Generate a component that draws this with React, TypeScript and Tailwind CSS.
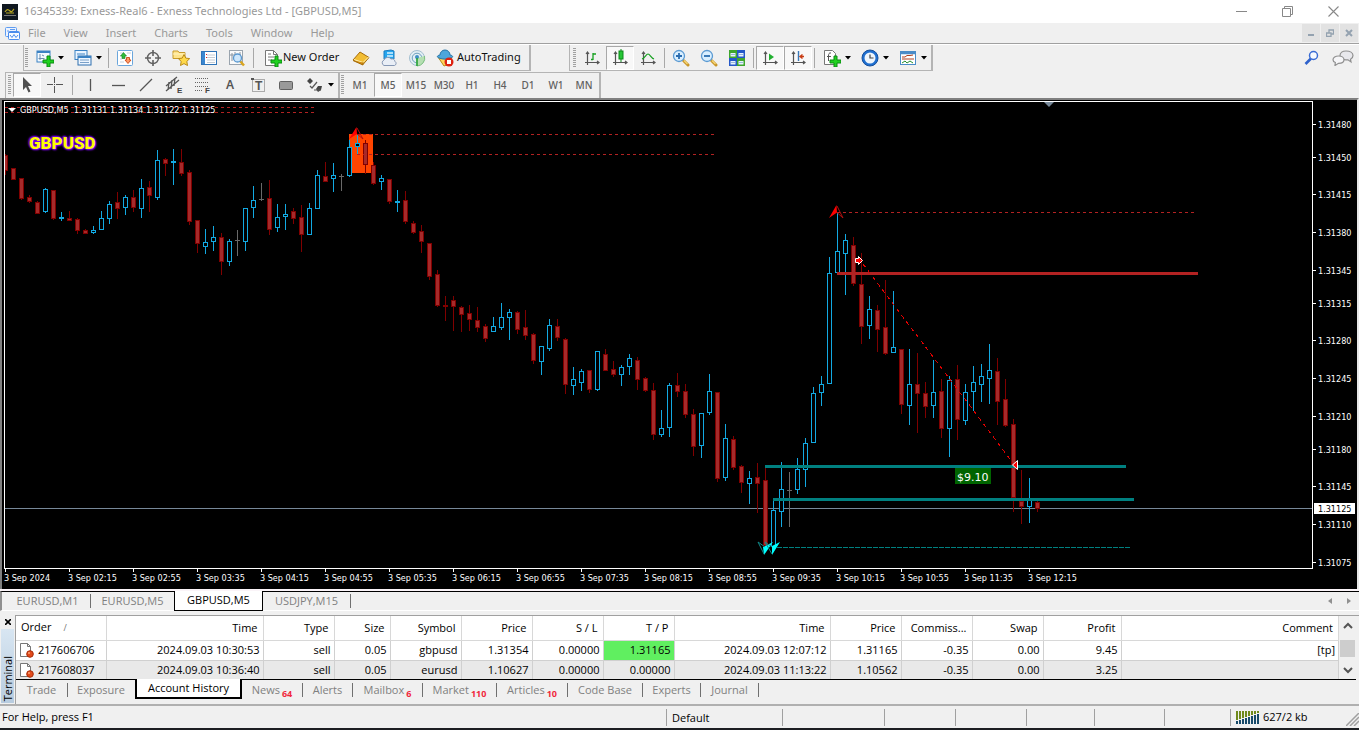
import { ReactNode } from "react";

type Candle = ["u" | "d" | "n", number, number, number, number];

// direction, high, body top, body bottom, low
const CANDLES: Candle[] = [
  ["d", 154, 155, 171, 175], ["d", 168, 168, 180, 180], ["d", 178, 178, 199, 200], ["d", 195, 197, 202, 203],
  ["d", 201, 202, 214, 214], ["u", 188, 189, 212, 213], ["d", 190, 190, 219, 220], ["u", 212, 217, 219, 221],
  ["d", 211, 218, 221, 221], ["d", 218, 219, 231, 234], ["d", 229, 230, 234, 234], ["u", 226, 230, 233, 234],
  ["u", 211, 218, 230, 230], ["u", 201, 204, 219, 224], ["d", 192, 202, 209, 219], ["u", 195, 197, 208, 215],
  ["d", 190, 197, 208, 212], ["u", 179, 188, 209, 218], ["d", 181, 187, 196, 212], ["u", 150, 160, 198, 200],
  ["d", 158, 159, 164, 176], ["u", 149, 161, 163, 185], ["d", 149, 162, 174, 176], ["d", 170, 172, 222, 225],
  ["d", 220, 220, 244, 253], ["u", 229, 242, 247, 254], ["u", 226, 237, 242, 251], ["d", 233, 237, 262, 275],
  ["u", 239, 241, 262, 266], ["n", 230, 240, 241, 256], ["u", 208, 208, 242, 251], ["u", 186, 200, 208, 218],
  ["n", 183, 199, 200, 201], ["d", 180, 198, 230, 235], ["u", 204, 217, 228, 232], ["u", 204, 214, 217, 230],
  ["d", 208, 211, 219, 224], ["d", 205, 217, 235, 252], ["u", 203, 208, 235, 235], ["u", 170, 175, 209, 209],
  ["d", 162, 176, 182, 182], ["u", 163, 175, 179, 192], ["n", 174, 176, 177, 191], ["u", 140, 147, 176, 177],
  ["u", 135, 143, 147, 154], ["d", 140, 143, 165, 174], ["d", 162, 165, 184, 185], ["u", 175, 178, 182, 190],
  ["d", 179, 179, 202, 204], ["u", 190, 201, 203, 212], ["d", 191, 200, 222, 224], ["d", 221, 223, 233, 234],
  ["d", 225, 231, 242, 253], ["d", 243, 243, 277, 280], ["d", 270, 274, 306, 307], ["d", 296, 305, 307, 321],
  ["d", 296, 300, 307, 331], ["d", 306, 307, 315, 332], ["d", 305, 313, 320, 331], ["d", 307, 320, 328, 332],
  ["d", 324, 326, 339, 342], ["u", 317, 326, 332, 332], ["u", 303, 317, 328, 330], ["u", 309, 312, 318, 340],
  ["d", 311, 312, 330, 334], ["d", 310, 327, 336, 340], ["d", 333, 334, 361, 364], ["u", 346, 346, 362, 375],
  ["u", 319, 325, 349, 351], ["d", 319, 326, 338, 341], ["d", 338, 339, 385, 394], ["u", 367, 379, 386, 395],
  ["u", 369, 371, 383, 391], ["d", 370, 370, 390, 393], ["u", 351, 351, 390, 391], ["d", 349, 354, 371, 371],
  ["d", 361, 369, 375, 377], ["u", 365, 367, 375, 386], ["u", 354, 358, 367, 375], ["d", 357, 360, 380, 390],
  ["d", 377, 378, 391, 392], ["d", 383, 390, 435, 440], ["u", 410, 428, 435, 437], ["u", 383, 385, 428, 437],
  ["d", 373, 385, 392, 397], ["d", 384, 391, 415, 418], ["d", 409, 414, 447, 456], ["u", 413, 413, 446, 458],
  ["u", 374, 391, 413, 415], ["d", 392, 392, 479, 482], ["u", 424, 438, 478, 481], ["d", 436, 439, 468, 470],
  ["d", 465, 466, 483, 493], ["u", 471, 478, 484, 504], ["d", 463, 477, 484, 513], ["d", 467, 480, 546, 546],
  ["u", 499, 510, 547, 547], ["u", 462, 489, 512, 527], ["n", 472, 490, 491, 527], ["u", 458, 469, 490, 494],
  ["u", 438, 443, 470, 487], ["u", 387, 393, 443, 443], ["u", 376, 384, 393, 406], ["u", 257, 273, 384, 384],
  ["u", 212, 251, 273, 273], ["u", 234, 240, 254, 295], ["d", 237, 245, 284, 286], ["d", 253, 284, 327, 344],
  ["u", 296, 309, 326, 339], ["d", 305, 310, 330, 352], ["d", 280, 327, 354, 355], ["u", 291, 347, 353, 353],
  ["d", 349, 349, 405, 414], ["u", 349, 384, 406, 425], ["d", 353, 384, 394, 433], ["d", 382, 393, 407, 418],
  ["u", 360, 392, 406, 418], ["d", 379, 391, 429, 438], ["u", 376, 380, 429, 457], ["d", 365, 379, 420, 440],
  ["u", 384, 392, 421, 425], ["u", 366, 382, 392, 411], ["u", 364, 376, 385, 402], ["u", 344, 370, 379, 404],
  ["d", 358, 371, 402, 425], ["d", 379, 399, 426, 427], ["d", 419, 424, 498, 512], ["d", 470, 501, 507, 524],
  ["u", 478, 500, 507, 523], ["d", 501, 502, 509, 512],
];

const WICK = { u: "#12a9e2", d: "#800000", n: "#696969" };
const BODY = { u: "#000000", d: "#a52a2a", n: "#696969" };

const PRICES: [number, string][] = [
  [124, "1.31480"], [157, "1.31450"], [194, "1.31415"], [232, "1.31380"], [270, "1.31345"],
  [303, "1.31315"], [340, "1.31280"], [378, "1.31245"], [416, "1.31210"], [449, "1.31180"],
  [486, "1.31145"], [524, "1.31110"], [562, "1.31075"],
];

const TIMES = [
  "2024", "02:15", "02:55", "03:35", "04:15", "04:55", "05:35", "06:15", "06:55",
  "07:35", "08:15", "08:55", "09:35", "10:15", "10:55", "11:35", "12:15",
];

const COLUMNS: [string, string][] = [
  ["Order", "w-[90px]"], ["Time", "w-[157px]"], ["Type", "w-[71px]"], ["Size", "w-[56px]"],
  ["Symbol", "w-[71px]"], ["Price", "w-[71px]"], ["S / L", "w-[71px]"], ["T / P", "w-[71px]"],
  ["Time", "w-[156px]"], ["Price", "w-[71px]"], ["Commiss...", "w-[71px]"], ["Swap", "w-[71px]"],
  ["Profit", "w-[78px]"], ["Comment", "w-auto"],
];

const ORDERS = [
  ["217606706", "2024.09.03 10:30:53", "sell", "0.05", "gbpusd", "1.31354", "0.00000", "1.31165", "2024.09.03 12:07:12", "1.31165", "-0.35", "0.00", "9.45", "[tp]"],
  ["217608037", "2024.09.03 10:36:40", "sell", "0.05", "eurusd", "1.10627", "0.00000", "0.00000", "2024.09.03 11:13:22", "1.10562", "-0.35", "0.00", "3.25", ""],
];

const TERMINAL_TABS: [string, string, string][] = [
  ["Trade", "", "w-[52px]"], ["Exposure", "", "w-[67px]"], ["Account History", "", "w-[107px]"],
  ["News", "64", "w-[61px]"], ["Alerts", "", "w-[50px]"], ["Mailbox", "6", "w-[70px]"],
  ["Market", "110", "w-[74px]"], ["Articles", "10", "w-[71px]"], ["Code Base", "", "w-[75px]"],
  ["Experts", "", "w-[58px]"], ["Journal", "", "w-[58px]"],
];

const STATUS_CELLS = ["w-[102px]", "w-[71px]", "w-[71px]", "w-[68px]", "w-[70px]", "w-[66px]"];

const Icon = ({ children }: { children: ReactNode }) => (
  <svg width="18" height="18" viewBox="0 0 18 18" fill="none" className="shrink-0">
    {children}
  </svg>
);

const Plus = () => (
  <path d="M11 7h3v4h4v3h-4v4h-3v-4H7v-3h4z" fill="#1fd11f" stroke="#0a8a12" strokeWidth="1" />
);

const ToolButton = ({
  label,
  pressed,
  menu,
  children,
}: {
  label: string;
  pressed?: boolean;
  menu?: boolean;
  children: ReactNode;
}) => (
  <button
    aria-label={label}
    className={`flex h-6 shrink-0 items-center ${
      menu ? "w-[38px] gap-1 pl-[6px]" : "w-7 justify-center"
    } ${pressed ? "border border-[#a8a8a8] border-r-white border-b-white bg-[#f8f8f8]" : ""}`}
  >
    {children}
    {menu && (
      <svg width="6" height="4" viewBox="0 0 6 4" className="shrink-0">
        <path d="M0 0h6L3 3.500z" fill="#000" />
      </svg>
    )}
  </button>
);

const Separator = () => <span className="mx-[2px] h-5 w-px shrink-0 bg-[#a8a8a8]" />;

const Grip = () => (
  <svg width="4" height="20" className="mx-px shrink-0" shapeRendering="crispEdges">
    {[0, 2, 4, 6, 8, 10, 12, 14, 16, 18].map((y) => (
      <rect key={y} x="0" y={y} width="3" height="1" fill="#a0a0a0" />
    ))}
  </svg>
);

const Axes = () => (
  <path d="M4.500 3v13M2 13.500h14M3 5l1.500-2L6 5M14 12l2 1.500-2 1.500" stroke="#555" strokeWidth="1.200" />
);

const Lens = ({ plus }: { plus?: boolean }) => (
  <Icon>
    <path d="M11.500 11.500l4.500 4.500" stroke="#c8962a" strokeWidth="3" strokeLinecap="round" />
    <path d="M12 11.500l3.500 3.500" stroke="#f7d978" strokeWidth="1.200" />
    <circle cx="7" cy="7" r="5.500" fill="#d9efff" stroke="#5b9ad2" strokeWidth="1.300" />
    <path d={plus ? "M4 7h6M7 4v6" : "M4 7h6"} stroke="#2a6cb0" strokeWidth="1.800" />
  </Icon>
);

const MainToolbar = () => (
  <div className="flex h-[27px] items-center border-t border-white">
    <div className="ml-[23px] flex h-[26px] items-center border-r-2 border-b border-l border-[#b4b4b4] pr-px">
      <Grip />
      <ToolButton label="New chart" menu>
        <Icon>
          <rect x="1" y="2" width="13" height="11" fill="#f4faff" stroke="#3b82c4" />
          <path d="M1 3h13" stroke="#3b82c4" strokeWidth="2" />
          <path d="M4 5v6M2.500 9.500h6M6 6l2 1" stroke="#6c8fb0" />
          <Plus />
        </Icon>
      </ToolButton>
      <ToolButton label="Profiles" menu>
        <Icon>
          <rect x="1" y="1.500" width="12" height="9" fill="#eaf4ff" stroke="#3b82c4" />
          <path d="M3 5h8" stroke="#3b82c4" />
          <rect x="4" y="7" width="13" height="9" fill="#eef6ff" stroke="#2f6fae" />
          <path d="M4 8h13" stroke="#3b82c4" strokeWidth="2" />
          <path d="M6 11h9M6 13.500h9" stroke="#7aa0c8" />
        </Icon>
      </ToolButton>
      <Separator />
      <ToolButton label="Market Watch">
        <Icon>
          <rect x="1.500" y="1.500" width="15" height="15" rx="1" fill="#fff" stroke="#6aa6dc" />
          <path d="M4 4h3M4 7h1M4 10h2M4 13h4M11 4h4" stroke="#c4d0dc" />
          <path d="M7.500 3.500L10.500 7H9v2.500H6V7H4.500z" fill="#2dbb3a" stroke="#168020" strokeWidth=".6" />
          <path d="M12 14.500L9 11h1.500V8.500h3V11H15z" fill="#ff9a66" stroke="#c94716" strokeWidth=".9" />
        </Icon>
      </ToolButton>
      <ToolButton label="Data Window">
        <Icon>
          <circle cx="9" cy="9" r="5.500" stroke="#606060" strokeWidth="1.400" />
          <path d="M9 1v6M9 11v6M1 9h6M11 9h6" stroke="#606060" strokeWidth="1.600" />
        </Icon>
      </ToolButton>
      <ToolButton label="Navigator">
        <Icon>
          <path d="M1 2h5l1 1.500h6v6H1z" fill="#ffe48a" stroke="#c79a2a" />
          <path d="M1 5h12" stroke="#fff3c0" />
          <path d="M12 5.500l1.800 3.600 3.900.5-2.900 2.800.7 4.100-3.500-1.900-3.500 1.900.7-4.100-2.900-2.800 3.900-.5z" fill="#ffd94a" stroke="#b98a18" />
        </Icon>
      </ToolButton>
      <ToolButton label="Terminal">
        <Icon>
          <rect x="1.500" y="2.500" width="15" height="13" fill="#fff" stroke="#2f74b8" />
          <path d="M3.500 3v12" stroke="#3a86d0" strokeWidth="3" />
          <path d="M7 6h8M7 8.500h8M7 11h8M7 13.500h8" stroke="#c4ccd4" />
          <path d="M6 5h1v1H6zM6 8h1v1H6z" fill="#e02020" />
        </Icon>
      </ToolButton>
      <ToolButton label="Strategy Tester">
        <Icon>
          <rect x="1.500" y="1.500" width="13" height="14" fill="#fafafa" stroke="#9aa4ae" />
          <path d="M4 4v8M7 3v4M12 3v6M2 6h11" stroke="#8a94a0" />
          <path d="M12 12l4 4.500" stroke="#d9a520" strokeWidth="2.500" />
          <circle cx="9.500" cy="9" r="4" fill="#cde6fb" stroke="#5a98d0" strokeWidth="1.300" />
        </Icon>
      </ToolButton>
      <Separator />
      <button className="flex h-6 w-[91px] shrink-0 items-center gap-px pl-2 font-['Noto_Sans'] text-[11px] text-[#111]">
        <Icon>
          <path d="M1.500 1.500h8l4 4v11h-12z" fill="#fff" stroke="#777" />
          <path d="M9.500 1.500v4h4M4 5h3M4 8h6M4 11h4" stroke="#777" />
          <Plus />
        </Icon>
        <span className="whitespace-nowrap">New Order</span>
      </button>
      <ToolButton label="MetaEditor">
        <Icon>
          <path d="M1 11l7-8 9 5.500-6 7z" fill="#f2bd33" stroke="#a66c0a" />
          <path d="M2 10.500l9 3 5.500-5.500" stroke="#fff0b0" />
          <path d="M1 11.500l10 4.500v-2.500" fill="#d38d14" stroke="#a66c0a" />
        </Icon>
      </ToolButton>
      <ToolButton label="VPS">
        <Icon>
          <path d="M4 2l7-1 3 1v8l-7 1-3-1z" fill="#25a5ee" stroke="#1a7cc0" />
          <path d="M7 4h6M7 7h6" stroke="#d8f2ff" strokeWidth="1.300" />
          <path d="M4 16.500a3 3 0 010-5.500 4 4 0 017-1 3 3 0 014 2.500 2.200 2.200 0 01-.5 4z" fill="#e9eef6" stroke="#8597b4" />
        </Icon>
      </ToolButton>
      <ToolButton label="Signals">
        <Icon>
          <circle cx="9" cy="9" r="7.500" fill="#e2eff4" stroke="#a4bfd0" />
          <circle cx="9" cy="9" r="4.800" stroke="#6e9fbe" />
          <path d="M9 9v8a8 8 0 007.500-10" fill="#b5dfb2" stroke="#7cc080" />
          <circle cx="9" cy="8" r="2" fill="#3f8fc4" />
          <path d="M9 9v8" stroke="#2ea43a" strokeWidth="1.600" />
        </Icon>
      </ToolButton>
      <button className="flex h-6 w-[97px] shrink-0 items-center gap-[3px] pl-[5px] font-['Noto_Sans'] text-[11px] text-[#111]">
        <Icon>
          <path d="M2 8h14l-3 7-5 2z" fill="#ffd65c" stroke="#b98a18" />
          <path d="M4 6a5 5 0 0110 0c3 .5 3.500 2 1 3-4 1.500-8 1.500-12 0-2.500-1-2-2.500 1-3z" fill="#4da6dc" stroke="#2574a8" />
          <circle cx="13" cy="13" r="4.500" fill="#dd2211" />
          <rect x="11" y="11" width="4" height="4" fill="#fff" />
        </Icon>
        <span className="whitespace-nowrap">AutoTrading</span>
      </button>
    </div>
    <div className="ml-[38px] flex h-[26px] items-center border-r-2 border-b border-l border-[#b4b4b4] pl-[2px]">
      <Grip />
      <ToolButton label="Bar chart">
        <Icon>
          <Axes />
          <path d="M10 4v7M10 5h3M8 10.500h2" stroke="#16a020" strokeWidth="1.300" />
        </Icon>
      </ToolButton>
      <ToolButton label="Candlesticks" pressed>
        <Icon>
          <Axes />
          <path d="M10 0v13" stroke="#0b8a18" />
          <rect x="8" y="2" width="4" height="8" fill="#25c535" stroke="#0b8a18" />
        </Icon>
      </ToolButton>
      <ToolButton label="Line chart">
        <Icon>
          <Axes />
          <path d="M3 10c3-1 4-5 6-5s3 4 6 5" stroke="#16a020" strokeWidth="1.200" />
        </Icon>
      </ToolButton>
      <Separator />
      <ToolButton label="Zoom in"><Lens plus /></ToolButton>
      <ToolButton label="Zoom out"><Lens /></ToolButton>
      <ToolButton label="Tile windows">
        <Icon>
          <path d="M1 1h8v8H1zM9 9h8v8H9z" fill="#3fa62d" />
          <path d="M9 1h8v8H9zM1 9h8v8H1z" fill="#2458c8" />
          <path d="M2.500 4h5v3.500h-5zM10.500 4h5v3.500h-5zM2.500 12h5v3.500h-5zM10.500 12h5v3.500h-5z" fill="#e8f2ff" />
          <path d="M3 5.500h4M11 5.500h4M3 13.500h4M11 13.500h4" stroke="#9ab8d8" />
        </Icon>
      </ToolButton>
      <Separator />
      <ToolButton label="Auto scroll" pressed>
        <Icon>
          <Axes />
          <path d="M8 4.500l5 3.500-5 3.500z" fill="#22b030" />
        </Icon>
      </ToolButton>
      <ToolButton label="Chart shift" pressed>
        <Icon>
          <Axes />
          <path d="M9.500 2v10" stroke="#3a78b8" strokeWidth="1.400" />
          <path d="M15 7.500h-4M13.500 5.500l-2.500 2 2.500 2" stroke="#c83c14" strokeWidth="1.400" />
        </Icon>
      </ToolButton>
      <Separator />
      <ToolButton label="Indicators" menu>
        <Icon>
          <path d="M1.500 1.500h8l3 3v11h-11z" fill="#fff" stroke="#777" />
          <path d="M8 4c-2-.5-2.500 1-2.500 3v5M4 7.500h4" stroke="#555" />
          <Plus />
        </Icon>
      </ToolButton>
      <ToolButton label="Periods" menu>
        <Icon>
          <circle cx="9" cy="9" r="8" fill="#1f6fd0" stroke="#164f9c" />
          <circle cx="9" cy="9" r="5.500" fill="#eef5fc" />
          <path d="M9 5.500V9h3.500" stroke="#444" strokeWidth="1.200" />
        </Icon>
      </ToolButton>
      <ToolButton label="Templates" menu>
        <Icon>
          <rect x="1.500" y="2.500" width="15" height="13" fill="#fff" stroke="#4a8cc8" />
          <path d="M1 4h16" stroke="#4a8cc8" strokeWidth="2.500" />
          <path d="M3 8h3l2-1.500h3l3-.5M3 10h12" stroke="#b04020" />
          <path d="M3 14l3-2 2 2 3-2 3 2" stroke="#259030" />
        </Icon>
      </ToolButton>
    </div>
    <div className="ml-auto flex items-center gap-3 pr-[5px]">
      <button aria-label="Search">
        <svg width="16" height="16" viewBox="0 0 16 16" fill="none">
          <path d="M1.500 14L7 8.500" stroke="#2f62cc" strokeWidth="2.600" />
          <circle cx="9.500" cy="5.500" r="4" fill="#f6faff" stroke="#3a6cd4" strokeWidth="1.500" />
        </svg>
      </button>
      <button aria-label="Chat">
        <svg width="22" height="16" viewBox="0 0 22 16" fill="none" stroke="#909090" strokeWidth="1.200">
          <path d="M14 1c4 0 7 1.800 7 4.500 0 2-1 3-2.500 3.700L19 12l-3-2.200C11 10.500 8 8.500 8 5.500S10.500 1 14 1z" fill="#e8e8ec" />
          <path d="M6.500 6c3 0 5.500 1.500 5.500 3.700s-2.500 3.600-5.500 3.600L3 15.500l.3-3C2 12 1 11 1 9.700 1 7.500 3.500 6 6.500 6z" fill="#f6f6f8" />
        </svg>
      </button>
    </div>
  </div>
);

const DrawToolbar = () => (
  <div className="flex h-[27px] items-center">
    <div className="ml-[5px] flex h-[26px] items-center border-t border-r-2 border-l border-[#b4b4b4] pl-px">
      <Grip />
      <ToolButton label="Cursor" pressed>
        <Icon><path d="M5 1v13l3-3 2.500 5.500 2-1L10 10h4z" fill="#505050" /></Icon>
      </ToolButton>
      <ToolButton label="Crosshair">
        <Icon><path d="M8.500 1v6M8.500 10v7M1 8.500h6M10 8.500h7M8 8.500h1" stroke="#555" /></Icon>
      </ToolButton>
      <span className="mx-[3px] h-5 w-px shrink-0 bg-[#a8a8a8]" />
      <ToolButton label="Vertical line">
        <Icon><path d="M9.500 3v12" stroke="#555" strokeWidth="1.300" /></Icon>
      </ToolButton>
      <ToolButton label="Horizontal line">
        <Icon><path d="M3 9.500h13" stroke="#555" strokeWidth="1.300" /></Icon>
      </ToolButton>
      <ToolButton label="Trendline">
        <Icon><path d="M3 15L15 3" stroke="#555" strokeWidth="1.200" /></Icon>
      </ToolButton>
      <ToolButton label="Equidistant channel">
        <Icon>
          <path d="M1 10L12 1M1 15L14 4M4 6l-1 8M7 4L6 13M10 2L9 10" stroke="#555" strokeWidth="1.300" />
          <text x="12" y="17" fontSize="8" fontWeight="700" fill="#444" className="font-['Liberation_Sans']">E</text>
        </Icon>
      </ToolButton>
      <ToolButton label="Fibonacci">
        <Icon>
          <path d="M2 2.500h14M2 6.500h14M2 10.500h14M2 14.500h8" stroke="#666" strokeDasharray="1 1" />
          <text x="12" y="17" fontSize="8" fontWeight="700" fill="#444" className="font-['Liberation_Sans']">F</text>
        </Icon>
      </ToolButton>
      <ToolButton label="Text">
        <span className="font-['Noto_Sans'] text-xs font-semibold text-[#555]">A</span>
      </ToolButton>
      <ToolButton label="Text label">
        <Icon>
          <rect x="3.500" y="3.500" width="12" height="12" stroke="#666" strokeDasharray="1 1" />
          <path d="M2 2h3v2H2z" fill="#555" />
          <text x="6" y="14" fontSize="12" fontWeight="700" fill="#555" className="font-['Liberation_Sans']">T</text>
        </Icon>
      </ToolButton>
      <ToolButton label="Rectangle">
        <Icon><rect x="2.500" y="5.500" width="13" height="8" rx="1" fill="#999" stroke="#606060" /></Icon>
      </ToolButton>
      <ToolButton label="Arrows" menu>
        <Icon>
          <path d="M4 2l3 3-3 3-3-3zM12 10h4l-1 4-3 2-2-3z" fill="#444" />
          <path d="M4 10l2 2 5-6M8 14h7" stroke="#555" strokeWidth="1.200" />
        </Icon>
      </ToolButton>
    </div>
    <div className="flex h-[26px] items-center border-t border-r-2 border-[#b4b4b4] pr-px text-[#606060]">
      <Grip />
      {["M1", "M5", "M15", "M30", "H1", "H4", "D1", "W1", "MN"].map((period) => (
        <ToolButton key={period} label={period} pressed={period === "M5"}>
          <span className="font-['Noto_Sans'] text-[10px] font-medium">{period}</span>
        </ToolButton>
      ))}
    </div>
  </div>
);

const DashedLine = ({ x1, x2, y, color = "#b22222", dash = "3 3" }: { x1: number; x2: number; y: number; color?: string; dash?: string }) => (
  <line x1={x1} x2={x2} y1={y + 0.5} y2={y + 0.5} stroke={color} strokeDasharray={dash} />
);

const Plot = () => (
  <svg className="block h-[466px] w-full" shapeRendering="crispEdges">
    <g transform="translate(-5 -102)">
      <rect x="349" y="134" width="24" height="39" fill="#ff4500" />
      <rect x="5" y="508" width="100%" height="1" fill="#778899" />
      {CANDLES.map(([dir, high, top, bottom, low], i) => {
        const x = 5 + i * 8;
        return (
          <g key={i}>
            <rect x={x} y={high} width="1" height={low - high} fill={WICK[dir]} />
            <rect x={x - 2} y={top} width="5" height={bottom - top} fill={WICK[dir]} />
            {bottom - top > 2 && (
              <rect x={x - 1} y={top + 1} width="3" height={bottom - top - 2} fill={BODY[dir]} />
            )}
          </g>
        );
      })}
      <DashedLine x1={5} x2={315} y={107} />
      <DashedLine x1={5} x2={315} y={112} />
      <DashedLine x1={357} x2={715} y={134} />
      <DashedLine x1={357} x2={715} y={154} />
      <DashedLine x1={837} x2={1195} y={212} />
      <DashedLine x1={777} x2={1130} y={547} color="#008080" dash="5 1" />
      <rect x="837" y="272" width="361" height="3" fill="#b22222" />
      <rect x="765" y="465" width="361" height="3" fill="#008080" />
      <rect x="773" y="498" width="361" height="3" fill="#008080" />
      <line x1="863" y1="264" x2="1013" y2="463" stroke="#e00000" strokeDasharray="4 4" />
      <g shapeRendering="auto">
        <path d="M356.500 127L349 139l8-5zM836.500 205L829 218l8-5.500z" fill="#ff0000" />
        <path d="M357 128l6 11-6-5M837 206l6 12-6-5.500" fill="none" stroke="#b01010" />
        <path d="M764 555l-1-8 10-5zM772 555l0-9 8-4z" fill="#00ffff" />
        <path d="M764 554l-6-12 7 5M772 554l-7-12 7 5" fill="none" stroke="#108888" />
        <path d="M855.500 258.500h3v-2l4 4-4 4v-2h-3z" fill="#ff0000" stroke="#fff" />
        <path d="M1017.500 460.500v9l-5-4.500z" fill="#ff0000" stroke="#fff" />
        <path d="M1044 102h10l-5 5z" fill="#778899" />
        <path d="M8 108h8l-4 4z" fill="#fff" />
      </g>
      <rect x="955" y="468" width="36" height="16" fill="#006400" />
      <text x="957" y="481" fontSize="11" fill="#fff" className="font-['DejaVu_Sans']">$9.10</text>
      <text x="20" y="113" fontSize="9" fill="#fff" className="font-['DejaVu_Sans_Condensed','Noto_Sans']" xmlSpace="preserve">GBPUSD,M5  1.31131 1.31134 1.31122 1.31125</text>
      <text x="29" y="149" fontSize="17" fontWeight="900" fill="#ffff00" className="font-['Roboto'] [text-shadow:0_0_2px_#8000ff,0_0_2px_#8000ff,1px_1px_2px_#8000ff,-1px_-1px_2px_#8000ff]">GBPUSD</text>
    </g>
  </svg>
);

const PriceAxis = () => (
  <svg className="block h-[468px] w-11 font-['DejaVu_Sans_Condensed','Noto_Sans'] text-[9px]">
    <g transform="translate(-1313 -101)" fill="#fff">
      {PRICES.map(([y, price]) => (
        <g key={price}>
          <rect x="1313" y={y} width="3" height="1" />
          <text x="1318" y={y + 4}>{price}</text>
        </g>
      ))}
      <rect x="1314" y="503" width="41" height="11" />
      <text x="1318" y="512" fill="#000">1.31125</text>
    </g>
  </svg>
);

const Chart = () => (
  <div className="border-t-2 border-r-2 border-l-2 border-[#808080] border-r-[#e8e8e8] bg-black pt-px pb-[2px] pl-[2px] text-white">
    <div className="flex">
      <div className="min-w-0 flex-1 border border-white">
        <Plot />
      </div>
      <PriceAxis />
    </div>
    <div className="flex h-[18px] overflow-hidden">
      {TIMES.map((time) => (
        <div key={time} className="w-16 shrink-0">
          <div className="ml-px h-[3px] w-px bg-white" />
          <div className="font-['DejaVu_Sans_Condensed','Noto_Sans'] text-[9px] leading-3 whitespace-nowrap">3 Sep {time}</div>
        </div>
      ))}
    </div>
  </div>
);

const ChartTabs = () => (
  <div className="flex h-[26px] flex-col border-t-2 border-[#faf4f8] text-[11px] text-[#808080]">
    <div className="flex h-5 items-center border-t border-b border-t-black border-b-white border-l-2 border-l-[#909090] pl-[3px]">
      <button className="h-[14px] w-[86px] border-r border-[#707070] leading-[14px]">EURUSD,M1</button>
      <button className="h-[14px] w-[83px] leading-[14px]">EURUSD,M5</button>
      <button className="-mt-px h-5 w-[89px] border-x border-b border-black bg-white leading-4 text-black">GBPUSD,M5</button>
      <button className="h-[14px] w-[88px] border-r border-[#707070] leading-[14px]">USDJPY,M15</button>
      <button aria-label="Scroll tabs left" className="mr-[15px] ml-auto">
        <svg width="4" height="6" viewBox="0 0 4 6"><path d="M4 0v6L0 3z" fill="#909090" /></svg>
      </button>
      <button aria-label="Scroll tabs right" className="mr-2">
        <svg width="4" height="6" viewBox="0 0 4 6"><path d="M0 0v6l4-3z" fill="#909090" /></svg>
      </button>
    </div>
  </div>
);

const OrderIcon = () => (
  <svg width="16" height="16" viewBox="0 0 16 16" fill="none" className="shrink-0">
    <path d="M1.500 1.500h7l3 3v10h-10z" fill="#fff" stroke="#777" />
    <path d="M8.500 1.500v3h3" stroke="#777" />
    <circle cx="11" cy="12" r="3.300" fill="#e24a1a" stroke="#a82c08" />
    <circle cx="10" cy="11" r="1" fill="#ffa070" />
  </svg>
);

const Terminal = () => (
  <div className="flex h-[89px]">
    <div className="flex w-[15px] shrink-0 flex-col items-center">
      <button aria-label="Close terminal" className="flex h-[14px] items-center">
        <svg width="6" height="6" viewBox="0 0 6 6"><path d="M0 0l6 6M6 0L0 6" stroke="#000" strokeWidth="1.600" /></svg>
      </button>
      <div className="mb-px flex w-[13px] flex-1 items-end bg-linear-to-b from-[#d8e6f2] to-[#b8ccdf]">
        <span className="rotate-180 pt-[2px] text-[11px] leading-[13px] text-black [writing-mode:vertical-rl]">Terminal</span>
      </div>
    </div>
    <div className="flex min-w-0 flex-1 flex-col border-t border-l border-[#a0a0a0]">
      <div className="mr-[3px] flex h-16 shrink-0 overflow-hidden border-b border-black bg-white">
        <table className="w-full flex-1 table-fixed border-collapse text-[11px] leading-4 text-black">
          <thead>
            <tr className="h-6">
              {COLUMNS.map(([name, width], i) => (
                <th
                  key={i}
                  className={`${width} border-r border-b border-[#d8d8d8] px-[5px] font-normal whitespace-nowrap ${i === 0 ? "text-left" : "text-right"}`}
                >
                  {name}
                  {i === 0 && <span className="pl-3 text-[9px] text-[#777]">/</span>}
                </th>
              ))}
            </tr>
          </thead>
          <tbody>
            {ORDERS.map((order, row) => (
              <tr key={order[0]} className={`h-5 ${row ? "bg-[#e9e9e9]" : ""}`}>
                {order.map((value, i) => (
                  <td
                    key={i}
                    className={`border-r border-b border-[#d0d0d0] px-[3px] text-right whitespace-nowrap ${
                      i === 7 && row === 0 ? "bg-[#60ef60]" : ""
                    }`}
                  >
                    {i === 0 ? (
                      <span className="flex items-center gap-[3px]">
                        <OrderIcon />
                        {value}
                      </span>
                    ) : (
                      value
                    )}
                  </td>
                ))}
              </tr>
            ))}
          </tbody>
        </table>
        <div className="flex w-[17px] shrink-0 flex-col items-center bg-[#f0f0f0]">
          <svg width="10" height="24" viewBox="0 0 10 24" fill="none"><path d="M1 12l4-4 4 4" stroke="#555" strokeWidth="2" /></svg>
          <div className="h-[17px] w-[15px] bg-[#cdcdcd]" />
          <svg width="10" height="22" viewBox="0 0 10 22" fill="none"><path d="M1 11l4 4 4-4" stroke="#555" strokeWidth="2" /></svg>
        </div>
      </div>
      <div className="flex items-start text-[11px] text-[#808080]">
        {TERMINAL_TABS.map(([name, count, width]) =>
          name === "Account History" ? (
            <button key={name} className={`${width} -mt-px h-5 shrink-0 border-x-2 border-b-2 border-black bg-white leading-[18px] whitespace-nowrap text-black`}>
              {name}
            </button>
          ) : (
            <button
              key={name}
              className={`${width} mt-[3px] flex h-[14px] shrink-0 justify-center border-r leading-[14px] whitespace-nowrap ${
                name === "Exposure" ? "border-transparent" : "border-[#707070]"
              }`}
            >
              {name}
              {count && <span className="pt-1 pl-[2px] text-[9px] font-bold text-[#f0283c]">{count}</span>}
            </button>
          )
        )}
      </div>
    </div>
  </div>
);

const StatusBar = () => (
  <div className="flex h-6 items-center border-t-2 border-[#b0b0b0] border-b-white text-[11px] text-black">
    <span className="min-w-0 flex-1 pl-[2px]">For Help, press F1</span>
    <span className="h-[17px] w-[116px] border-l border-[#a0a0a0] pl-[5px] leading-[17px]">Default</span>
    {STATUS_CELLS.map((width, i) => (
      <span key={i} className={`${width} h-[17px] border-l border-[#a0a0a0]`} />
    ))}
    <span className="flex h-[17px] w-[129px] items-center gap-1 border-l border-[#a0a0a0] pl-[5px]">
      <svg width="23" height="13" shapeRendering="crispEdges">
        {[0, 1, 2, 3, 4, 5, 6, 7].map((i) => (
          <g key={i}>
            <rect x={i * 3} y="0" width="2" height={9 - i} fill="#6f8a1c" />
            <rect x={i * 3} y={10 - i} width="2" height={3 + i} fill="#174a6a" />
          </g>
        ))}
      </svg>
      627/2 kb
      <svg width="13" height="13" viewBox="0 0 13 13" className="mt-1 ml-auto shrink-0">
        <path d="M0 13L13 0M4 13l9-9M8 13l5-5" stroke="#a0a0a0" strokeWidth="1.500" />
      </svg>
    </span>
  </div>
);

const App = () => (
  <div className="flex min-h-screen flex-col bg-[#f0f0f0] font-['Open_Sans',sans-serif]">
    <header className="flex h-[23px] shrink-0 items-center bg-white font-['Noto_Sans'] text-[11px] text-[#999]">
      <svg width="16" height="16" viewBox="0 0 16 16" fill="none" className="ml-[2px]">
        <rect width="16" height="16" fill="#101820" />
        <path d="M3 8c2-3 3-3 5-1s3-1 4-2M4 9h8" stroke="#b8a820" strokeWidth="1.200" />
        <path d="M2 11.500h12" stroke="#777" />
      </svg>
      <h1 className="ml-[6px]">16345339: Exness-Real6 - Exness Technologies Ltd - [GBPUSD,M5]</h1>
      <div className="mr-5 ml-auto flex items-center gap-[35px]">
        <button aria-label="Minimize">
          <svg width="11" height="11" viewBox="0 0 11 11"><path d="M0 5.500h11" stroke="#888" /></svg>
        </button>
        <button aria-label="Restore">
          <svg width="11" height="11" viewBox="0 0 11 11" fill="none" stroke="#888"><path d="M.5 2.500h8v8h-8zM2.500 2.500v-2h8v8h-2" /></svg>
        </button>
        <button aria-label="Close">
          <svg width="11" height="11" viewBox="0 0 11 11"><path d="M.5.5l10 10M10.500.5l-10 10" stroke="#888" strokeWidth="1.100" /></svg>
        </button>
      </div>
    </header>
    <nav className="flex h-[21px] shrink-0 items-center gap-[18px] border-b border-[#a0a0a0] pl-[5px] font-['Noto_Sans'] text-[11px] text-[#999]">
      <svg width="15" height="15" viewBox="0 0 15 15" fill="none" className="-mr-[10px]">
        <rect x=".5" y="1.500" width="11" height="9" rx="1" fill="#eef4ff" stroke="#5f9cf0" />
        <path d="M2 5h2M5 3.500h5" stroke="#5f9cf0" />
        <rect x="3.500" y="5.500" width="11" height="8" rx="1" fill="#f8fbff" stroke="#4a8cec" />
        <path d="M4 6.500h10" stroke="#4a8cec" />
        <path d="M5 9l2 2.500L9 8.500l2 3L13 9" stroke="#4a8cec" />
      </svg>
      {["File", "View", "Insert", "Charts", "Tools", "Window", "Help"].map((item) => (
        <button key={item}>{item}</button>
      ))}
      <div className="mr-px ml-auto flex gap-px">
        <button aria-label="Minimize chart" className="flex h-[18px] w-[18px] items-center justify-center bg-[#e2e2e2]">
          <svg width="8" height="8" viewBox="0 0 8 8"><path d="M1 6h6" stroke="#94a2b0" strokeWidth="2" /></svg>
        </button>
        <button aria-label="Restore chart" className="flex h-[18px] w-[18px] items-center justify-center bg-[#e2e2e2]">
          <svg width="8" height="8" viewBox="0 0 8 8" fill="none" stroke="#94a2b0"><path d="M.5 4h4.500v3.500H.5zM3 3.500V1h4.500v4H5" strokeWidth="1.300" /></svg>
        </button>
        <button aria-label="Close chart" className="flex h-[18px] w-[18px] items-center justify-center bg-[#e2e2e2]">
          <svg width="8" height="8" viewBox="0 0 8 8"><path d="M1 1l6 6M7 1L1 7" stroke="#94a2b0" strokeWidth="2" /></svg>
        </button>
      </div>
    </nav>
    <MainToolbar />
    <DrawToolbar />
    <Chart />
    <ChartTabs />
    <Terminal />
    <StatusBar />
    <div className="min-h-[2px] flex-1 bg-[#1c1e22]" />
  </div>
);

export default App;
